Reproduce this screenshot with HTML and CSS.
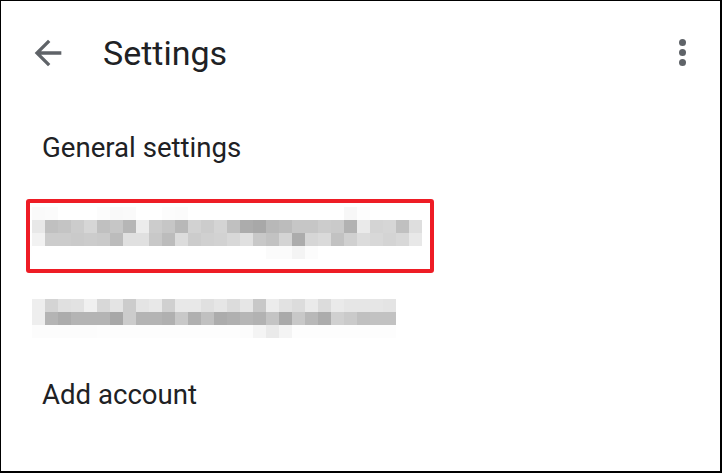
FILE: index.html
```html
<!DOCTYPE html>
<html lang="en">
<head>
<meta charset="utf-8">
<title>Settings</title>
<link rel="stylesheet" href="styles.css">
</head>
<body>
<div class="screen">
  <header class="appbar">
    <button class="icon-btn back" aria-label="Back">
      <svg viewBox="0 0 24 24" width="40" height="40"><path d="M20 11H7.83l5.59-5.59L12 4l-8 8 8 8 1.41-1.41L7.83 13H20v-2z" fill="currentColor"/></svg>
    </button>
    <h1 class="title">Settings</h1>
    <button class="icon-btn more" aria-label="More options">
      <span class="dot"></span><span class="dot"></span><span class="dot"></span>
    </button>
  </header>
  <ul class="list">
    <li class="item item-general"><span class="label">General settings</span></li>
    <li class="item item-acc1">
      <div class="highlight">
        <div class="pixels" data-rows="acc1"></div>
      </div>
    </li>
    <li class="item item-acc2">
      <div class="pixels" data-rows="acc2"></div>
    </li>
    <li class="item item-add"><span class="label">Add account</span></li>
  </ul>
</div>
<script src="app.js"></script>
</body>
</html>
```

FILE: styles.css
```css
* { box-sizing: border-box; }
html, body { margin: 0; padding: 0; background: #fff; }
body { font-family: Roboto, "Noto Sans", Arial, sans-serif; color: #202124; }
.screen {
  width: 722px;
  height: 473px;
  border-style: solid;
  border-color: #000;
  border-width: 1px 2px 2px 1px;
  background: #fff;
  overflow: hidden;
}
.appbar {
  height: 103px;
  display: flex;
  align-items: center;
  padding: 0 0 0 27px;
}
.icon-btn {
  border: 0;
  background: none;
  padding: 0;
  color: #5f6368;
  display: flex;
  align-items: center;
  justify-content: center;
}
.back { width: 40px; height: 40px; }
.back svg { display: block; }
.title {
  margin: 0 0 0 35px;
  font-weight: 400;
  font-size: 34px;
  line-height: 40px;
  color: #202124;
  flex: 1;
}
.more {
  flex-direction: column;
  gap: 3px;
  width: 20px;
  margin-right: 28px;
}
.dot {
  width: 7px;
  height: 7px;
  border-radius: 50%;
  background: #5f6368;
}
.list { list-style: none; margin: 0; padding: 0; }
.item { display: flex; align-items: center; padding-left: 31px; }
.label { font-size: 27.6px; line-height: 32px; color: #202124; margin-left: 10px; }
.item-general { height: 88px; }
.item-acc1 { height: 87px; padding-left: 25px; }
.item-acc2 { height: 78px; }
.item-add { height: 76px; }
.highlight {
  width: 408px;
  height: 74px;
  border: 4px solid #ee1c25;
  border-radius: 3px;
  padding: 4px 0 0 2px;
}
.pixels { display: grid; grid-auto-rows: 13px; }
.pixels .row { display: flex; }
.pixels .px { width: 13px; height: 13px; }
```

FILE: app.js
```js
var data = {
  acc1: [
    "fafafa fbfbfb fff fff fff fcfcfc f9f9f9 fafafa fff fff fcfcfc fbfbfb fff fff fff fff fff fff fff fff fff fff fff fff f7f7f7 fdfdfd fff fff fff fff",
    "e8e8e8 c0c0c0 c4c4c4 cccccc d6d6d6 c0c0c0 c6c6c6 b6b6b6 ececec cccccc c6c6c6 b8b8b8 d2d2d2 cccccc d4d4d4 c0c0c0 acacac a8a8a8 b8b8b8 bcbcbc c6c6c6 c6c6c6 cccccc cacaca b2b2b2 eaeaea d4d4d4 d6d6d6 c0c0c0 dedede",
    "f2f2f2 cccccc cccccc cacaca cccccc cacaca bcbcbc e0e0e0 e0e0e0 c8c8c8 bcbcbc dcdcdc cccccc d0d0d0 d2d2d2 d8d8d8 e0e0e0 c8c8c8 c2c2c2 d4d4d4 acacac d6d6d6 dadada c2c2c2 d0d0d0 dcdcdc d8d8d8 d4d4d4 d8d8d8 e8e8e8",
    "fff fff fff fff fff fff fff fff fff fff fff fff fff fff fff fff fff fff fbfbfb fbfbfb f4f4f4 fcfcfc fff fff fff fff fff fff fff fff"
  ],
  acc2: [
    "eeeeee d4d4d4 e0e0e0 e2e2e2 f0f0f0 d8d8d8 e4e4e4 cccccc e4e4e4 e8e8e8 d0d0d0 e8e8e8 e8e8e8 e0e0e0 e6e6e6 dcdcdc e6e6e6 c8c8c8 ececec e2e2e2 dcdcdc eaeaea dcdcdc eaeaea e6e6e6 e6e6e6 e6e6e6 e4e4e4",
    "eeeeee b4b4b4 acacac b4b4b4 b4b4b4 b4b4b4 a8a8a8 cccccc b4b4b4 b4b4b4 b0b0b0 c8c8c8 b0b0b0 c0c0c0 acacac b0b0b0 b6b6b6 b2b2b2 c4c4c4 aaaaaa c8c8c8 b8b8b8 acacac d0d0d0 cacaca c0c0c0 c2c2c2 c2c2c2",
    "fcfcfc fcfcfc fcfcfc fcfcfc fcfcfc fdfdfd fdfdfd fdfdfd fdfdfd fdfdfd fdfdfd fdfdfd fdfdfd fdfdfd fdfdfd fdfdfd fcfcfc f4f4f4 eaeaea f4f4f4 fdfdfd fdfdfd fdfdfd fdfdfd fdfdfd fdfdfd fdfdfd fdfdfd"
  ]
};
document.querySelectorAll('.pixels').forEach(function (grid) {
  data[grid.getAttribute('data-rows')].forEach(function (line) {
    var row = document.createElement('div');
    row.className = 'row';
    line.split(' ').forEach(function (c) {
      var px = document.createElement('div');
      px.className = 'px';
      px.style.background = '#' + c;
      row.appendChild(px);
    });
    grid.appendChild(row);
  });
});
```
